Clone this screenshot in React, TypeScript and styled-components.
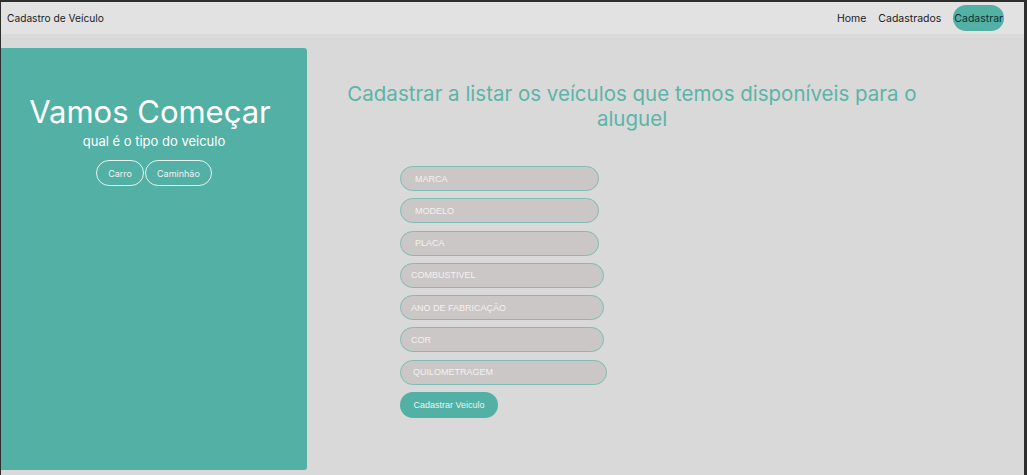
import styled, { createGlobalStyle } from "styled-components";

const GlobalStyle = createGlobalStyle`
    html, body {
        margin: 0;
        padding: 0;
        background-color: #d9d9d9;
    }
    * {
        box-sizing: border-box;
    }
`;

const Frame = styled.div`
    min-height: 100vh;
    border-left: 1px solid #2e2e2e;
    border-right: 3px solid #2e2e2e;
    font-family: Inter, "Noto Sans", sans-serif;
`;

const NavBar = styled.nav`
    display: flex;
    align-items: center;
    justify-content: space-between;
    height: 34px;
    padding: 0 20px 0 6px;
    background-color: #e2e2e2;
    border-top: 2px solid #2e2e2e;
`;

const Brand = styled.span`
    font-size: 10.2px;
    color: #1c1c1c;
`;

const NavLinks = styled.div`
    display: flex;
    align-items: center;
    gap: 12px;
`;

const NavLink = styled.a<{ $active?: boolean }>`
    font-size: 10.5px;
    text-decoration: none;
    height: 26px;
    display: flex;
    align-items: center;
    padding: 0 ${(p) => (p.$active ? "1px" : "0")};
    border-radius: 13px;
    background-color: ${(p) => (p.$active ? "#52b0a5" : "transparent")};
    color: ${(p) => (p.$active ? "#10302b" : "#1c1c1c")};
`;

const Main = styled.main`
    display: grid;
    grid-template-columns: 306px 1fr;
    padding-top: 14px;
`;

const Panel = styled.section`
    height: 422px;
    background-color: #52b0a5;
    border-radius: 0 3px 3px 0;
    display: flex;
    flex-direction: column;
    align-items: center;
    padding-top: 45px;
    color: #ffffff;
`;

const PanelTitle = styled.h1`
    font-size: 31px;
    font-weight: 400;
    margin: 0 8px 0 0;
    line-height: 37px;
`;

const PanelSubtitle = styled.p`
    font-size: 13px;
    line-height: 16px;
    margin: 3px 0 11px;
`;

const ChoiceRow = styled.div`
    display: flex;
    gap: 1px;
`;

const ChoiceButton = styled.button`
    font-family: Inter, "Noto Sans", sans-serif;
    font-size: 9px;
    color: #f2f2f2;
    background: transparent;
    border: 1px solid #e8f4f2;
    border-radius: 13px;
    height: 26px;
    padding: 0 11px;
`;

const Content = styled.section`
    padding: 33px 87px 0 20px;
`;

const Heading = styled.h2`
    font-size: 20.5px;
    font-weight: 400;
    line-height: 25px;
    color: #5cb4a7;
    text-align: center;
    margin: 0;
`;

const Form = styled.form`
    display: flex;
    flex-direction: column;
    align-items: flex-start;
    gap: 7.3px;
    margin: 35px 0 0 73px;
`;

const Field = styled.input<{ $width: number; $indent: number }>`
    width: ${(p) => p.$width}px;
    height: 25px;
    border-radius: 13px;
    border: 1px solid #7dbdb3;
    background-color: #cbc7c7;
    padding-left: ${(p) => p.$indent}px;
    font-family: "Liberation Sans", Arial, sans-serif;
    font-size: 9px;
    outline: none;

    &::placeholder {
        color: #f3f1f1;
    }
`;

const SubmitButton = styled.button`
    font-family: "Liberation Sans", Arial, sans-serif;
    font-size: 9px;
    color: #e9f6f4;
    background-color: #52b0a5;
    border: none;
    border-radius: 13px;
    height: 26px;
    padding: 0 13.5px;
`;

const fields = [
    { label: "MARCA", width: 199, indent: 14 },
    { label: "MODELO", width: 199, indent: 14 },
    { label: "PLACA", width: 199, indent: 14 },
    { label: "COMBUSTIVEL", width: 204, indent: 10 },
    { label: "ANO DE FABRICAÇÃO", width: 204, indent: 10 },
    { label: "COR", width: 204, indent: 10 },
    { label: "QUILOMETRAGEM", width: 207, indent: 12 },
];

export default function App() {
    return (
        <>
            <GlobalStyle />
            <Frame>
                <NavBar>
                    <Brand>Cadastro de Veículo</Brand>
                    <NavLinks>
                        <NavLink href="#">Home</NavLink>
                        <NavLink href="#">Cadastrados</NavLink>
                        <NavLink href="#" $active>Cadastrar</NavLink>
                    </NavLinks>
                </NavBar>
                <Main>
                    <Panel>
                        <PanelTitle>Vamos Começar</PanelTitle>
                        <PanelSubtitle>qual é o tipo do veiculo</PanelSubtitle>
                        <ChoiceRow>
                            <ChoiceButton>Carro</ChoiceButton>
                            <ChoiceButton>Caminhão</ChoiceButton>
                        </ChoiceRow>
                    </Panel>
                    <Content>
                        <Heading>Cadastrar a listar os veículos que temos disponíveis para o aluguel</Heading>
                        <Form onSubmit={(e) => e.preventDefault()}>
                            {fields.map((f) => (
                                <Field key={f.label} placeholder={f.label} $width={f.width} $indent={f.indent} />
                            ))}
                            <SubmitButton type="submit">Cadastrar Veiculo</SubmitButton>
                        </Form>
                    </Content>
                </Main>
            </Frame>
        </>
    );
}
